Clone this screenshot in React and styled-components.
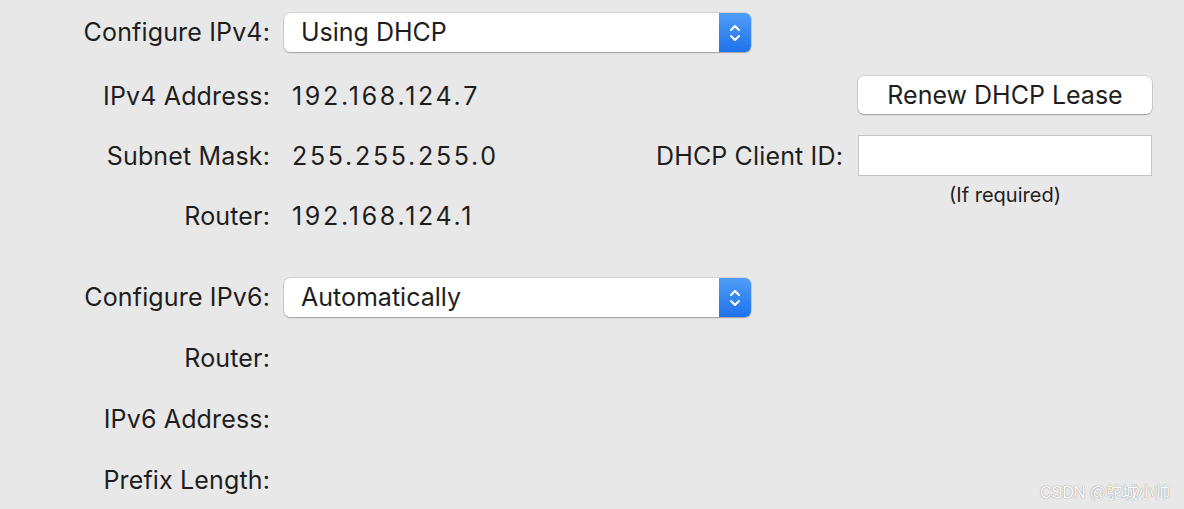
import React from 'react';
import styled, { createGlobalStyle } from 'styled-components';

const GlobalStyle = createGlobalStyle`
  html, body {
    margin: 0;
    padding: 0;
    background: #e8e8e8;
  }
  body {
    font-family: Inter, "Liberation Sans", Arial, sans-serif;
    color: #1e1e1e;
  }
`;

const Page = styled.div`
  position: relative;
  width: 1184px;
  height: 509px;
  overflow: hidden;
  background: #e8e8e8;
  box-sizing: border-box;
  padding: 13px 0 0 0;
`;

const Grid = styled.div`
  display: grid;
  grid-template-columns: 270px 467px 387px;
  grid-auto-rows: 61px;
  column-gap: 14px;
  align-items: start;
  margin-top: ${(p) => p.gap || 0}px;
`;

const Label = styled.div`
  grid-column: 1;
  text-align: right;
  font-size: 25px;
  line-height: 39px;
  white-space: nowrap;
  letter-spacing: 0.15px;
  margin-top: ${(p) => p.offset || 0}px;
`;

const Value = styled.div`
  grid-column: 2;
  font-size: 25px;
  line-height: 39px;
  padding-left: 8px;
  letter-spacing: 2.7px;
  margin-top: ${(p) => p.offset || 0}px;
`;

const Popup = styled.div`
  grid-column: 2;
  display: flex;
  height: 39px;
  background: #fff;
  border-radius: 6px;
  box-shadow: 0 0 0 0.5px rgba(0, 0, 0, 0.18), 0 1px 1.5px rgba(0, 0, 0, 0.25);
  overflow: hidden;
  margin-top: ${(p) => p.offset || 0}px;
`;

const PopupText = styled.div`
  flex: 1;
  font-size: 25px;
  line-height: 39px;
  padding-left: 17px;
`;

const Stepper = styled.div`
  width: 32px;
  display: flex;
  align-items: center;
  justify-content: center;
  background: linear-gradient(#4f9df8, #1f72ec);
`;

const Side = styled.div`
  grid-column: 3;
  display: flex;
  align-items: center;
  gap: 15px;
  margin-top: ${(p) => p.offset || 0}px;
`;

const SideLabel = styled.div`
  flex: 1;
  min-width: 0;
  display: flex;
  justify-content: flex-end;
  font-size: 25px;
  white-space: nowrap;
  letter-spacing: 0.15px;
`;

const Button = styled.div`
  flex-shrink: 0;
  width: 294px;
  height: 38px;
  box-sizing: border-box;
  background: #fff;
  border-radius: 6px;
  box-shadow: 0 0 0 0.5px rgba(0, 0, 0, 0.18), 0 1px 1.5px rgba(0, 0, 0, 0.25);
  font-size: 25px;
  line-height: 38px;
  text-align: center;
  margin-left: auto;
`;

const TextField = styled.div`
  flex-shrink: 0;
  width: 294px;
  height: 41px;
  box-sizing: border-box;
  background: #fff;
  border: 1px solid #c4c4c4;
`;

const Hint = styled.div`
  grid-column: 3;
  width: 294px;
  font-size: 20px;
  text-align: center;
  margin-left: 93px;
  margin-top: -13px;
`;

const Watermark = styled.div`
  position: absolute;
  right: 14px;
  bottom: 6px;
  font-size: 16px;
  color: #fff;
  text-shadow: 0 0 1px #9a9a9a, 0 0 1px #9a9a9a;
  font-family: "Liberation Sans", "Noto Sans CJK SC", sans-serif;
`;

const Chevrons = () => (
  <svg width="14" height="22" viewBox="0 0 14 22">
    <path d="M3 8 L7 4 L11 8" fill="none" stroke="#fff" strokeWidth="2" strokeLinecap="round" strokeLinejoin="round" />
    <path d="M3 14 L7 18 L11 14" fill="none" stroke="#fff" strokeWidth="2" strokeLinecap="round" strokeLinejoin="round" />
  </svg>
);

export default function App() {
  return (
    <Page>
      <GlobalStyle />
      <Grid>
        <Label>Configure IPv4:</Label>
        <Popup>
          <PopupText>Using DHCP</PopupText>
          <Stepper><Chevrons /></Stepper>
        </Popup>
        <div />

        <Label offset={3}>IPv4 Address:</Label>
        <Value offset={3}>192.168.124.7</Value>
        <Side offset={2}><Button>Renew DHCP Lease</Button></Side>

        <Label offset={2}>Subnet Mask:</Label>
        <Value offset={2}>255.255.255.0</Value>
        <Side offset={0}>
          <SideLabel><span>DHCP Client ID:</span></SideLabel>
          <TextField />
        </Side>

        <Label offset={1}>Router:</Label>
        <Value offset={1}>192.168.124.1</Value>
        <Hint>(If required)</Hint>
      </Grid>

      <Grid gap={21}>
        <Label>Configure IPv6:</Label>
        <Popup>
          <PopupText>Automatically</PopupText>
          <Stepper><Chevrons /></Stepper>
        </Popup>
        <div />

        <Label>Router:</Label>
        <div />
        <div />

        <Label>IPv6 Address:</Label>
        <div />
        <div />

        <Label>Prefix Length:</Label>
        <div />
        <div />
      </Grid>
      <Watermark>CSDN @鸵城小帅</Watermark>
    </Page>
  );
}
